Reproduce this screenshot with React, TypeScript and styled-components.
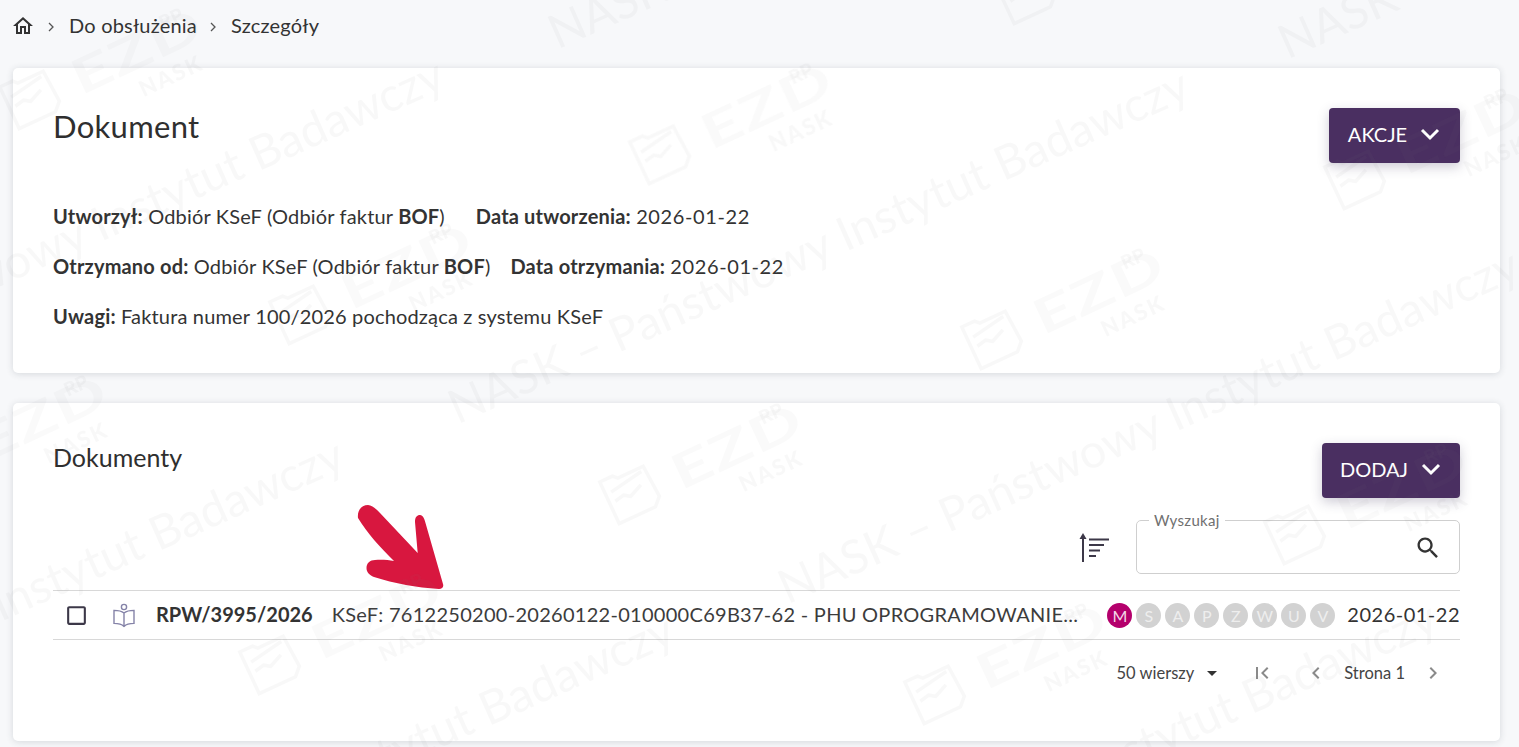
import styled, { createGlobalStyle } from "styled-components";

const GlobalStyle = createGlobalStyle`
  html, body {
    margin: 0;
    padding: 0;
    background: #f7f8fa;
    font-family: "Lato", "Noto Sans", sans-serif;
    color: #2e2e2e;
  }
`;

const Page = styled.div`
  position: relative;
  box-sizing: border-box;
  width: 1519px;
  height: 747px;
  padding: 0 19px 0 13px;
  overflow: hidden;
`;

const Breadcrumbs = styled.nav`
  display: flex;
  align-items: center;
  height: 52px;
  margin-bottom: 16px;
  font-size: 20px;
  color: #333;
`;

const HomeIcon = styled.svg`
  width: 24px;
  height: 24px;
  margin-left: -2px;
  fill: #333;
`;

const Crumb = styled.span`
  letter-spacing: 0.2px;
  transform: translateY(-1px);
`;

const Separator = styled.svg`
  width: 10px;
  height: 10px;
  margin: 1px 13px 0 11px;
  fill: none;
  stroke: #555;
  stroke-width: 1.3;
`;

const Card = styled.section<{ $height: number }>`
  box-sizing: border-box;
  height: ${(p) => p.$height}px;
  padding: 40px;
  margin-bottom: 30px;
  background: #fff;
  border-radius: 5px;
  box-shadow: 0 1px 7px rgba(40, 50, 60, 0.16);
`;

const CardHeader = styled.div`
  display: flex;
  justify-content: space-between;
  align-items: flex-start;
`;

const Title = styled.h1`
  margin: -1px 0 0;
  font-size: 31px;
  line-height: 38px;
  font-weight: 400;
  color: #2f2f2f;
  letter-spacing: 0.3px;
`;

const SubTitle = styled.h2`
  margin: -1px 0 0;
  font-size: 25px;
  line-height: 30px;
  font-weight: 400;
  color: #2f2f2f;
`;

const ActionButton = styled.button<{ $width: number }>`
  display: flex;
  align-items: center;
  justify-content: center;
  gap: 12px;
  width: ${(p) => p.$width}px;
  height: 55px;
  padding: 0 0 3px;
  border: 0;
  border-radius: 4px;
  background: #4a2f61;
  color: #fff;
  font-family: inherit;
  font-size: 20px;
  box-shadow: 0 4px 12px rgba(60, 50, 90, 0.25);
`;

const InfoBlock = styled.div`
  display: flex;
  flex-direction: column;
  gap: 26px;
  margin-top: 41px;
  font-size: 20px;
  line-height: 24px;
  letter-spacing: 0.17px;
  color: #333;
`;

const InfoRow = styled.div<{ $gap: number }>`
  display: flex;
  gap: ${(p) => p.$gap}px;
`;

const Label = styled.b`
  font-weight: 700;
`;

const DateValue = styled.span`
  letter-spacing: 0.6px;
`;

const ToolsRow = styled.div`
  display: flex;
  justify-content: flex-end;
  align-items: center;
  gap: 26px;
  margin-top: 22px;
  height: 54px;
`;

const SearchField = styled.fieldset`
  box-sizing: border-box;
  display: flex;
  align-items: center;
  justify-content: flex-end;
  width: 324px;
  height: 61px;
  margin: -7px 0 0;
  padding: 0 17px 0 0;
  border: 1px solid #cfcfcf;
  border-radius: 5px;
`;

const SearchLegend = styled.legend`
  margin-left: 12px;
  padding: 0 5px;
  font-size: 15px;
  line-height: 15px;
  letter-spacing: 0.3px;
  color: #707070;
`;

const SearchIcon = styled.svg`
  width: 28px;
  height: 28px;
  margin-top: -5px;
  fill: #333;
`;

const SortIcon = styled.svg`
  width: 32px;
  height: 32px;
  margin-left: -1px;
  fill: none;
  stroke: #3c3848;
  stroke-width: 1.8;
`;

const DocRow = styled.div`
  display: flex;
  align-items: center;
  height: 46px;
  margin-top: 16px;
  padding-bottom: 2px;
  border-top: 1px solid #d8d8d8;
  border-bottom: 1px solid #d8d8d8;
  font-size: 20px;
`;

const RowCheck = styled.svg`
  width: 25px;
  height: 25px;
  margin: 2px 0 0 11px;
  fill: #3c3848;
`;

const BookIcon = styled.svg`
  width: 26px;
  height: 26px;
  margin: 2px 0 0 22px;
  fill: none;
  stroke: #8583a8;
  stroke-width: 1.4;
`;

const DocNumber = styled.span`
  margin-left: 19px;
  font-weight: 700;
  color: #333;
`;

const DocTitle = styled.span`
  flex: 1;
  margin-left: 19px;
  white-space: nowrap;
  color: #3c3c3c;
  letter-spacing: 0.28px;
`;

const Badges = styled.div`
  display: flex;
  gap: 4px;
  margin: 2px 12px 0 0;
`;

const Badge = styled.span<{ $active?: boolean }>`
  display: flex;
  align-items: center;
  justify-content: center;
  width: 25px;
  height: 25px;
  border-radius: 50%;
  background: ${(p) => (p.$active ? "#b4006c" : "#d2d2d2")};
  color: ${(p) => (p.$active ? "#f3d9e8" : "#eeeeee")};
  font-size: 16px;
`;

const DocDate = styled.span`
  color: #333;
  letter-spacing: 0.5px;
`;

const Pager = styled.div`
  display: flex;
  justify-content: flex-end;
  align-items: center;
  height: 66px;
  padding-right: 15px;
  font-size: 16.5px;
  color: #444;
`;

const PagerIcon = styled.svg<{ $gap: number }>`
  width: 24px;
  height: 24px;
  margin-left: ${(p) => p.$gap}px;
  fill: #8a8a8a;
`;

const Caret = styled.svg`
  width: 24px;
  height: 24px;
  margin-left: 6px;
  fill: #333;
`;

const PagerText = styled.span<{ $gap: number }>`
  margin-left: ${(p) => p.$gap}px;
`;

const Arrow = styled.svg`
  position: absolute;
  left: 350px;
  top: 500px;
  width: 100px;
  height: 95px;
  fill: #d8173f;
`;

const Watermark = styled.div`
  position: absolute;
  inset: 0;
  pointer-events: none;
  color: rgba(120, 120, 130, 0.055);
  filter: blur(0.5px);
`;

const MarkLine = styled.span<{ $x: number; $y: number }>`
  position: absolute;
  left: ${(p) => p.$x}px;
  top: ${(p) => p.$y}px;
  white-space: nowrap;
  font-size: 47px;
  line-height: 48px;
  transform-origin: 0 100%;
  transform: translateY(-48px) rotate(-24deg);
`;

const Stamp = styled.div<{ $x: number; $y: number }>`
  position: absolute;
  left: ${(p) => p.$x}px;
  top: ${(p) => p.$y}px;
  display: flex;
  align-items: center;
  gap: 16px;
  height: 60px;
  transform-origin: 30px 30px;
  transform: translate(-30px, -30px) rotate(-25deg);
`;

const StampDoc = styled.svg`
  width: 60px;
  height: 60px;
  fill: none;
  stroke: currentColor;
  stroke-width: 3.5;
`;

const StampName = styled.span`
  display: inline-block;
  margin-top: 8px;
  font-size: 48px;
  line-height: 60px;
  font-weight: 700;
  letter-spacing: 1px;
  color: rgba(120, 120, 130, 0.04);
  transform-origin: 0 50%;
  transform: scaleX(1.45);
`;

const StampSup = styled.span`
  position: absolute;
  left: 178px;
  top: 10px;
  font-size: 19px;
  line-height: 20px;
  font-weight: 900;
`;

const StampOwner = styled.span`
  position: absolute;
  left: 132px;
  top: 60px;
  font-size: 22px;
  line-height: 24px;
  font-weight: 900;
  letter-spacing: 2px;
`;

const markLines = [
  [460, 430],
  [-285, 420],
  [560, 55],
  [1290, 65],
  [790, 610],
  [-385, 800],
  [-55, 975],
  [708, 963],
];

const stamps = [
  [660, 150],
  [300, 310],
  [992, 335],
  [1355, 175],
  [630, 490],
  [1295, 530],
  [270, 660],
  [935, 690],
  [30, 95],
  [-65, 462],
  [1025, -10],
];

const badges = ["M", "S", "A", "P", "Z", "W", "U", "V"];

function Chevron() {
  return (
    <svg width="22" height="14" viewBox="0 0 22 14" fill="none" stroke="#fff" strokeWidth="3">
      <path d="M3 3l8 8 8-8" />
    </svg>
  );
}

export default function App() {
  return (
    <Page>
      <GlobalStyle />
      <Breadcrumbs>
        <HomeIcon viewBox="0 0 24 24">
          <path d="M12 5.690l5 4.500V18h-2v-6H9v6H7v-7.810l5-4.500M12 3L2 12h3v8h6v-6h2v6h6v-8h3L12 3z" />
        </HomeIcon>
        <Separator viewBox="0 0 10 10">
          <path d="M3 1l4 4-4 4" />
        </Separator>
        <Crumb>Do obsłużenia</Crumb>
        <Separator viewBox="0 0 10 10">
          <path d="M3 1l4 4-4 4" />
        </Separator>
        <Crumb>Szczegóły</Crumb>
      </Breadcrumbs>

      <Card $height={305}>
        <CardHeader>
          <Title>Dokument</Title>
          <ActionButton $width={131}>
            AKCJE <Chevron />
          </ActionButton>
        </CardHeader>
        <InfoBlock>
          <InfoRow $gap={31}>
            <span>
              <Label>Utworzył:</Label> Odbiór KSeF (Odbiór faktur <Label>BOF</Label>)
            </span>
            <span>
              <Label>Data utworzenia:</Label> <DateValue>2026-01-22</DateValue>
            </span>
          </InfoRow>
          <InfoRow $gap={20}>
            <span>
              <Label>Otrzymano od:</Label> Odbiór KSeF (Odbiór faktur <Label>BOF</Label>)
            </span>
            <span>
              <Label>Data otrzymania:</Label> <DateValue>2026-01-22</DateValue>
            </span>
          </InfoRow>
          <InfoRow $gap={0}>
            <span>
              <Label>Uwagi:</Label> Faktura numer 100/2026 pochodząca z systemu KSeF
            </span>
          </InfoRow>
        </InfoBlock>
      </Card>

      <Card $height={338}>
        <CardHeader>
          <SubTitle>Dokumenty</SubTitle>
          <ActionButton $width={138}>
            DODAJ <Chevron />
          </ActionButton>
        </CardHeader>
        <ToolsRow>
          <SortIcon viewBox="0 0 32 32">
            <path d="M5 31V4" strokeWidth="2" />
            <path d="M1.500 8L5 2l3.500 6z" fill="#3c3848" stroke="none" />
            <path d="M11 8.500h20M11 14h15M11 19.500h11M11 25h7" />
          </SortIcon>
          <SearchField>
            <SearchLegend>Wyszukaj</SearchLegend>
            <SearchIcon viewBox="0 0 24 24">
              <path d="M15.500 14h-.79l-.28-.27C15.410 12.590 16 11.110 16 9.500 16 5.910 13.090 3 9.500 3S3 5.910 3 9.500 5.910 16 9.500 16c1.610 0 3.090-.59 4.230-1.570l.27.28v.79l5 4.990L20.490 19l-4.990-5zm-6 0C7.010 14 5 11.990 5 9.500S7.010 5 9.500 5 14 7.010 14 9.500 11.990 14 9.500 14z" />
            </SearchIcon>
          </SearchField>
        </ToolsRow>
        <DocRow>
          <RowCheck viewBox="0 0 24 24">
            <path d="M19 5v14H5V5h14m0-2H5c-1.100 0-2 .9-2 2v14c0 1.100.9 2 2 2h14c1.100 0 2-.9 2-2V5c0-1.100-.9-2-2-2z" />
          </RowCheck>
          <BookIcon viewBox="0 0 26 26">
            <circle cx="13" cy="5" r="2.600" />
            <path d="M13 11c-2.500-2-6-2.600-10-2.600v13c4 0 7.500.6 10 3 2.500-2.400 6-3 10-3v-13c-4 0-7.500.6-10 2.600zM13 11v13" />
          </BookIcon>
          <DocNumber>RPW/3995/2026</DocNumber>
          <DocTitle>KSeF: 7612250200-20260122-010000C69B37-62 - PHU OPROGRAMOWANIE...</DocTitle>
          <Badges>
            {badges.map((letter, i) => (
              <Badge key={letter} $active={i === 0}>
                {letter}
              </Badge>
            ))}
          </Badges>
          <DocDate>2026-01-22</DocDate>
        </DocRow>
        <Pager>
          <span>50 wierszy</span>
          <Caret viewBox="0 0 24 24">
            <path d="M7 10l5 5 5-5z" />
          </Caret>
          <PagerIcon $gap={26} viewBox="0 0 24 24">
            <path d="M18.410 16.590 13.820 12l4.590-4.590L17 6l-6 6 6 6zM6 6h2v12H6z" />
          </PagerIcon>
          <PagerIcon $gap={30} viewBox="0 0 24 24">
            <path d="M15.410 7.410 14 6l-6 6 6 6 1.410-1.410L10.830 12z" />
          </PagerIcon>
          <PagerText $gap={16}>Strona 1</PagerText>
          <PagerIcon $gap={16} viewBox="0 0 24 24">
            <path d="M8.590 16.590 10 18l6-6-6-6-1.410 1.410L13.170 12z" />
          </PagerIcon>
        </Pager>
      </Card>

      <Arrow viewBox="0 0 100 95">
        <path d="M8 18C7 10 12 5 18 5c4 0 8 4 12 8l37.700 40L65 22c0-5 2-7 5-7s4.500 4 5.500 8L93 84c1 3-1 5-4 5-11-1-23-2-33-4-11-2-22-5-32-8-5-2-7.500-5-7.500-9 0-5 3.500-8 8.500-8 7-.5 13 0 19 1C30 47 17 33 8 18z" />
      </Arrow>

      <Watermark>
        {markLines.map(([x, y]) => (
          <MarkLine key={`${x}-${y}`} $x={x} $y={y}>
            NASK – Państwowy Instytut Badawczy
          </MarkLine>
        ))}
        {stamps.map(([x, y]) => (
          <Stamp key={`${x}-${y}`} $x={x} $y={y}>
            <StampDoc viewBox="0 0 60 60">
              <path d="M6 10h14l4 4h28l2 34-8 8H6z" />
              <path d="M12 24l36-6M12 34l10-2 6 4 14-6" />
            </StampDoc>
            <StampName>EZD</StampName>
            <StampSup>RP</StampSup>
            <StampOwner>NASK</StampOwner>
          </Stamp>
        ))}
      </Watermark>
    </Page>
  );
}
